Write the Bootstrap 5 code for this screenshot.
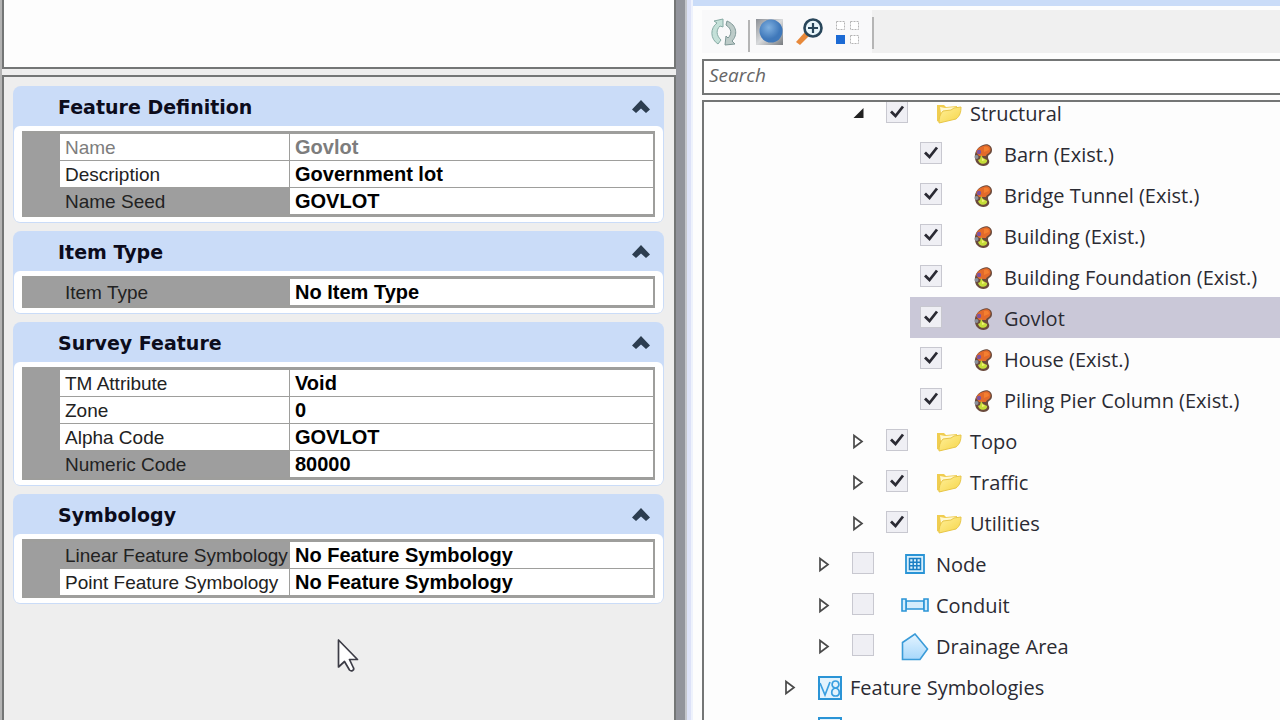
<!DOCTYPE html>
<html lang="en">
<head>
<meta charset="utf-8">
<meta name="viewport" content="width=device-width, initial-scale=1">
<title>Feature Definition</title>
<link href="https://cdn.jsdelivr.net/npm/bootstrap@5.3.0/dist/css/bootstrap.min.css" rel="stylesheet">
<style>
  body { font-family: "Open Sans", "Noto Sans", sans-serif; background: #eee; color: #2b2b33; }
  .workspace { display: grid; grid-template-columns: 676fr 17px 587fr; height: 100vh; }

  /* properties side */
  .props { background: #eee; border-left: 2px solid #b4b4b4; }
  .preview-box { height: 69px; background: #fdfdfd; border: 2px solid #747676; border-top: 0; }
  .group-box { margin-top: 6px; padding: 9px 10px 0 9px; border: 2px solid #747676; border-bottom: 0; background: #eee; }
  .group-item { background: #cadcf8; border-radius: 8px; margin-bottom: 8px; padding: 0 1px 1px; }
  .group-head { height: 40px; padding: 2px 12px 0 44px; border: 0; background: none; color: #0c0c1c;
    font: bold 19px/38px "DejaVu Sans", sans-serif; text-align: left; }
  .group-body { background: #fff; border-radius: 6px; padding: 5px 8px; }
  .prop-grid { table-layout: fixed; width: 100%; border: 2px solid #9e9e9c; border-top-width: 3px; border-collapse: separate; border-spacing: 0;
    font: 20px/25px "Liberation Sans", sans-serif; background: #fff; }
  .prop-grid .gutter-col { width: 36px; }
  .prop-grid .label-col { width: 230px; }
  .prop-grid th, .prop-grid td { height: 27px; padding: 1px 0 0 5px; font-weight: 400; white-space: nowrap; border-bottom: 1px solid #9e9e9c; color: #222; }
  .prop-grid .gutter { background: #9e9e9e; padding: 0; border-color: #9e9e9e; }
  .prop-grid th { border-right: 1px solid #9e9e9c; font-size: 19px; }
  .prop-grid td.val { font-weight: 700; color: #000; }
  .prop-grid .picked th { background: #9e9e9e; }
  .prop-grid .readonly th, .prop-grid .readonly td.val { color: #7d7d7d; }
  .pointer { position: absolute; left: 335px; top: 638px; }

  .splitter { background: linear-gradient(90deg, #92949c 0 9px, #c4c6cc 9px 11px, #dde2f8 11px 15px, #eef2fc 15px); }

  /* explorer side */
  .explorer { background: #fdfdfd; border-top: 6px solid #cadcf8; padding: 4px 0 0 9px; }
  .tools { height: 43px; background: #f0f0f0; }
  .tools-lit { background: #f9f9fa; padding: 0 0 0 6px; width: 170px; }
  .tool { border: 0; background: none; padding: 0; line-height: 0; }
  .tool-sep { width: 2px; height: 32px; background: #b5b5b5; }
  .search-box { margin-top: 6px; height: 36px; border: 2px solid #747676; border-right: 0; padding: 0 5px 4px; width: 100%;
    font: italic 19px/28px "Open Sans", sans-serif; color: #555; background: #fff; outline: 0; }
  .search-box::placeholder { color: #666; opacity: 1; }
  .tree { margin-top: 5px; border: 2px solid #747676; border-right: 0; border-bottom: 0; overflow: hidden; flex: 1 1 0; min-height: 0; }
  .tree > ul { margin-top: -10px; }
  .tree-row { display: flex; align-items: center; height: 41px; padding-top: 2px; font-size: 20px; line-height: 28px; white-space: nowrap; }
  .lv0 { padding-left: 80px; }
  .lv1 { padding-left: 114px; }
  .lv2 { padding-left: 148px; }
  .leaf { margin-left: 206px; padding-left: 10px; }
  .leaf.chosen { background: #cac8d8; }
  .twist { border: 0; background: none; padding: 0; width: 34px; flex: none; text-align: left; line-height: 0; }
  .tick { appearance: none; flex: none; width: 22px; height: 22px; margin: 0 28px 4px 0; border: 1px solid #c8c8d0; background: #efeff4; }
  .tick:checked { background: #efeff4 url("data:image/svg+xml,%3Csvg xmlns='http://www.w3.org/2000/svg' viewBox='0 0 20 20'%3E%3Cpath d='M4 9.500l4.500 4.500L16 4.500' fill='none' stroke='%232a2a33' stroke-width='2.800'/%3E%3C/svg%3E") center/20px; }
  .pic { width: 26px; height: 28px; flex: none; margin-right: 8px; display: flex; align-items: center; justify-content: center; }
  .lv0 .pic { width: 24px; }
</style>
</head>
<body class="overflow-hidden">
<svg class="position-absolute" width="0" height="0" aria-hidden="true">
  <defs>
    <linearGradient id="gFold" x1="0" y1="0" x2="1" y2="1"><stop offset="0" stop-color="#fff09a"/><stop offset="1" stop-color="#f6d548"/></linearGradient>
    <linearGradient id="gArea" x1="0" y1="0" x2="0" y2="1"><stop offset="0" stop-color="#e4f4ff"/><stop offset="1" stop-color="#a8d8fb"/></linearGradient>
  </defs>
  <symbol id="folder" viewBox="0 0 26 22"><path d="M1 2l7 0 2 2 11-1v5L5 20 1 18z" fill="#f0cd50"/><path d="M4 4l5 1 11-1v3L5 10z" fill="#fff8d0"/><path d="M7 8l8-1 3-2 7-1c0 5-1 9-5 12L3 20c0-5 1-9 4-12z" fill="url(#gFold)" stroke="#e8c648" stroke-width="1"/></symbol>
  <symbol id="palette" viewBox="0 0 20 24"><path d="M10 2c5-2 9 1 9 5 0 5-4 4-4 7s2 3 1 6c-2 4-9 4-12 0C1 16 0 6 10 2z" fill="#6a4a3c"/><path d="M10 3c5-2 8 1 7.500 4-.5 4-4 3.500-4.500 6H6L3 9c1-3 3-5 7-6z" fill="#e36a2a"/><path d="M11 4c3-1 5 0 5 3l-5 2z" fill="#f47f30"/><circle cx="6" cy="9" r="2.200" fill="#7d54a0"/><circle cx="3.500" cy="14" r="2" fill="#8a8f98"/><path d="M8 12l2 3 4 2c1 4-6 5-8 2l-1-2 2-1z" fill="#c5dd38"/><path d="M9 15l3 2-3 1z" fill="#f5f07a"/></symbol>
  <symbol id="closed" viewBox="0 0 12 18"><path d="M2 2.500v12L10 8.500z" fill="#fff" stroke="#4a4a4a" stroke-width="1.700"/></symbol>
  <symbol id="opened" viewBox="0 0 12 18"><path d="M11 3v10H1z" fill="#222"/></symbol>
  <symbol id="chev" viewBox="0 0 20 16"><path d="M1 10.500L10 1l9 9.500-4 3.500-5-4.500L5 14z" fill="#2c3d50"/></symbol>
  <symbol id="vbox" viewBox="0 0 24 24"><rect x="1" y="1" width="22" height="22" fill="#e3f3fd" stroke="#2a94d6" stroke-width="2"/><path d="M2 7l5 12 5-13M17.500 12c-5-1-4-7 0-7s5 6 0 7c-5 1-5 8 0 8s5-7 0-8z" fill="none" stroke="#3a9fe0" stroke-width="1.700"/></symbol>
</svg>

<main class="workspace">
  <section class="props d-flex flex-column position-relative" aria-label="Properties">
    <div class="preview-box flex-shrink-0"></div>
    <div class="group-box flex-grow-1">
      <div class="group-item">
        <button class="group-head d-flex w-100 align-items-center justify-content-between" type="button"><span>Feature Definition</span><svg width="20" height="16"><use href="#chev"/></svg></button>
        <div class="group-body">
          <table class="prop-grid"><colgroup><col class="gutter-col"><col class="label-col"><col></colgroup><tbody>
            <tr class="readonly"><td class="gutter"></td><th scope="row">Name</th><td class="val">Govlot</td></tr>
            <tr><td class="gutter"></td><th scope="row">Description</th><td class="val">Government lot</td></tr>
            <tr class="picked"><td class="gutter"></td><th scope="row">Name Seed</th><td class="val">GOVLOT</td></tr>
          </tbody></table>
        </div>
      </div>
      <div class="group-item">
        <button class="group-head d-flex w-100 align-items-center justify-content-between" type="button"><span>Item Type</span><svg width="20" height="16"><use href="#chev"/></svg></button>
        <div class="group-body">
          <table class="prop-grid"><colgroup><col class="gutter-col"><col class="label-col"><col></colgroup><tbody>
            <tr class="picked"><td class="gutter"></td><th scope="row">Item Type</th><td class="val">No Item Type</td></tr>
          </tbody></table>
        </div>
      </div>
      <div class="group-item">
        <button class="group-head d-flex w-100 align-items-center justify-content-between" type="button"><span>Survey Feature</span><svg width="20" height="16"><use href="#chev"/></svg></button>
        <div class="group-body">
          <table class="prop-grid"><colgroup><col class="gutter-col"><col class="label-col"><col></colgroup><tbody>
            <tr><td class="gutter"></td><th scope="row">TM Attribute</th><td class="val">Void</td></tr>
            <tr><td class="gutter"></td><th scope="row">Zone</th><td class="val">0</td></tr>
            <tr><td class="gutter"></td><th scope="row">Alpha Code</th><td class="val">GOVLOT</td></tr>
            <tr class="picked"><td class="gutter"></td><th scope="row">Numeric Code</th><td class="val">80000</td></tr>
          </tbody></table>
        </div>
      </div>
      <div class="group-item">
        <button class="group-head d-flex w-100 align-items-center justify-content-between" type="button"><span>Symbology</span><svg width="20" height="16"><use href="#chev"/></svg></button>
        <div class="group-body">
          <table class="prop-grid"><colgroup><col class="gutter-col"><col class="label-col"><col></colgroup><tbody>
            <tr class="picked"><td class="gutter"></td><th scope="row">Linear Feature Symbology</th><td class="val">No Feature Symbology</td></tr>
            <tr><td class="gutter"></td><th scope="row">Point Feature Symbology</th><td class="val">No Feature Symbology</td></tr>
          </tbody></table>
        </div>
      </div>
    </div>
    <svg class="pointer" width="22" height="34" viewBox="0 0 22 34"><path d="M1.500 2v27l6-5.500 5 8.500c2 2 5 0 4-2l-4-8.500h8z" fill="#fff" stroke="#3c3c46" stroke-width="1.700" stroke-linejoin="round"/></svg>
  </section>

  <div class="splitter"></div>

  <section class="explorer d-flex flex-column overflow-hidden" aria-label="Explorer">
    <div class="tools d-flex flex-shrink-0">
      <div class="tools-lit d-flex align-items-center">
        <button class="tool" type="button" aria-label="Refresh"><svg width="32" height="30" viewBox="0 0 32 30"><path d="M6 4l9-2v8l-3-1c-4 4-4 9 1 14l-3 4C2 22 2 11 9 6z" fill="#c4e0d8" stroke="#86aaa4"/><path d="M19 4c10 4 11 14 5 20l3 3-10 1 1-9 2 2c4-4 4-9-2-13z" fill="#bccbc8" stroke="#7d9695"/></svg></button>
        <span class="tool-sep mt-2 ms-2"></span>
        <button class="tool ms-1" type="button" aria-label="Globe"><svg width="32" height="30" viewBox="0 0 32 30"><defs><linearGradient id="gSq" x1="0" y1="0" x2="1" y2="1"><stop offset="0" stop-color="#8c9096"/><stop offset=".5" stop-color="#d8dadc"/><stop offset="1" stop-color="#777b80"/></linearGradient><radialGradient id="gGlobe" cx=".4" cy=".35"><stop offset="0" stop-color="#7fb0e0"/><stop offset="1" stop-color="#3f78ba"/></radialGradient></defs><rect x="2" y="2" width="27" height="26" fill="url(#gSq)"/><circle cx="17" cy="14" r="11.500" fill="url(#gGlobe)"/></svg></button>
        <button class="tool ms-2" type="button" aria-label="Zoom"><svg width="30" height="30" viewBox="0 0 30 30"><path d="M11 15l4 4L6 28l-4-3z" fill="#e8893a"/><circle cx="19" cy="11" r="8.500" fill="#e9f6fb" stroke="#28465a" stroke-width="2.600"/><path d="M19 6v10M14 11h10" stroke="#28465a" stroke-width="2.200"/></svg></button>
        <button class="tool ms-2" type="button" aria-label="Tiles"><svg width="30" height="30" viewBox="0 0 30 30"><g fill="#fff" stroke="#b4b4b4" stroke-dasharray="2 1"><path d="M4.500 4.500h8v8h-8zM18.500 4.500h8v8h-8zM18.500 18.500h8v8h-8z"/></g><path d="M4 18h9v9H4z" fill="#1c6ad4"/></svg></button>
      </div>
      <span class="tool-sep align-self-end mb-1"></span>
    </div>
    <input class="search-box flex-shrink-0" type="text" placeholder="Search" aria-label="Search">

    <div class="tree">
      <ul class="list-unstyled mb-0">
        <li><div class="tree-row lv2"><button class="twist" type="button" aria-label="Collapse"><svg width="13" height="18"><use href="#opened"/></svg></button><input class="tick" type="checkbox" id="t1" checked><label class="d-flex align-items-center" for="t1"><span class="pic"><svg width="26" height="22"><use href="#folder"/></svg></span>Structural</label></div>
          <ul class="list-unstyled">
            <li class="tree-row leaf"><input class="tick" type="checkbox" id="t2" checked><label class="d-flex align-items-center" for="t2"><span class="pic"><svg width="20" height="24"><use href="#palette"/></svg></span>Barn (Exist.)</label></li>
            <li class="tree-row leaf"><input class="tick" type="checkbox" id="t3" checked><label class="d-flex align-items-center" for="t3"><span class="pic"><svg width="20" height="24"><use href="#palette"/></svg></span>Bridge Tunnel (Exist.)</label></li>
            <li class="tree-row leaf"><input class="tick" type="checkbox" id="t4" checked><label class="d-flex align-items-center" for="t4"><span class="pic"><svg width="20" height="24"><use href="#palette"/></svg></span>Building (Exist.)</label></li>
            <li class="tree-row leaf"><input class="tick" type="checkbox" id="t5" checked><label class="d-flex align-items-center" for="t5"><span class="pic"><svg width="20" height="24"><use href="#palette"/></svg></span>Building Foundation (Exist.)</label></li>
            <li class="tree-row leaf chosen"><input class="tick" type="checkbox" id="t6" checked><label class="d-flex align-items-center" for="t6"><span class="pic"><svg width="20" height="24"><use href="#palette"/></svg></span>Govlot</label></li>
            <li class="tree-row leaf"><input class="tick" type="checkbox" id="t7" checked><label class="d-flex align-items-center" for="t7"><span class="pic"><svg width="20" height="24"><use href="#palette"/></svg></span>House (Exist.)</label></li>
            <li class="tree-row leaf"><input class="tick" type="checkbox" id="t8" checked><label class="d-flex align-items-center" for="t8"><span class="pic"><svg width="20" height="24"><use href="#palette"/></svg></span>Piling Pier Column (Exist.)</label></li>
          </ul></li>
        <li class="tree-row lv2"><button class="twist" type="button" aria-label="Expand"><svg width="12" height="18"><use href="#closed"/></svg></button><input class="tick" type="checkbox" id="t9" checked><label class="d-flex align-items-center" for="t9"><span class="pic"><svg width="26" height="22"><use href="#folder"/></svg></span>Topo</label></li>
        <li class="tree-row lv2"><button class="twist" type="button" aria-label="Expand"><svg width="12" height="18"><use href="#closed"/></svg></button><input class="tick" type="checkbox" id="t10" checked><label class="d-flex align-items-center" for="t10"><span class="pic"><svg width="26" height="22"><use href="#folder"/></svg></span>Traffic</label></li>
        <li class="tree-row lv2"><button class="twist" type="button" aria-label="Expand"><svg width="12" height="18"><use href="#closed"/></svg></button><input class="tick" type="checkbox" id="t11" checked><label class="d-flex align-items-center" for="t11"><span class="pic"><svg width="26" height="22"><use href="#folder"/></svg></span>Utilities</label></li>
        <li class="tree-row lv1"><button class="twist" type="button" aria-label="Expand"><svg width="12" height="18"><use href="#closed"/></svg></button><input class="tick" type="checkbox" id="t12"><label class="d-flex align-items-center" for="t12"><span class="pic"><svg width="20" height="24" viewBox="0 0 20 24"><path d="M1 2h18v18H1z" fill="#d8effc" stroke="#2a94d6" stroke-width="1.800"/><path d="M4.500 5.500h11v11h-11zM8.200 5v12M11.800 5v12M4 9.200h12M4 12.800h12" fill="none" stroke="#1b7fc4" stroke-width="1.500"/></svg></span>Node</label></li>
        <li class="tree-row lv1"><button class="twist" type="button" aria-label="Expand"><svg width="12" height="18"><use href="#closed"/></svg></button><input class="tick" type="checkbox" id="t13"><label class="d-flex align-items-center" for="t13"><span class="pic"><svg class="flex-shrink-0" width="28" height="16" viewBox="0 0 28 16"><g fill="#d4edfc" stroke="#2a94d6" stroke-width="1.600"><path d="M5 3h18v8H5z"/><path d="M1 1h4v12H1zM23 1h4v12h-4z"/></g></svg></span>Conduit</label></li>
        <li class="tree-row lv1"><button class="twist" type="button" aria-label="Expand"><svg width="12" height="18"><use href="#closed"/></svg></button><input class="tick" type="checkbox" id="t14"><label class="d-flex align-items-center" for="t14"><span class="pic"><svg class="flex-shrink-0" width="28" height="28" viewBox="0 0 28 28"><path d="M1.500 9.500L14 1l12.500 15L19 26.500H1.500z" fill="url(#gArea)" stroke="#3a9bd8" stroke-width="1.600"/></svg></span>Drainage Area</label></li>
        <li class="tree-row lv0"><button class="twist" type="button" aria-label="Expand"><svg width="12" height="18"><use href="#closed"/></svg></button><span class="pic"><svg width="24" height="24"><use href="#vbox"/></svg></span><span>Feature Symbologies</span></li>
        <li class="tree-row lv0"><button class="twist" type="button" aria-label="Expand"><svg width="12" height="18"><use href="#closed"/></svg></button><span class="pic"><svg width="24" height="24"><use href="#vbox"/></svg></span></li>
      </ul>
    </div>
  </section>
</main>
<script src="https://cdn.jsdelivr.net/npm/bootstrap@5.3.0/dist/js/bootstrap.bundle.min.js"></script>
</body>
</html>
